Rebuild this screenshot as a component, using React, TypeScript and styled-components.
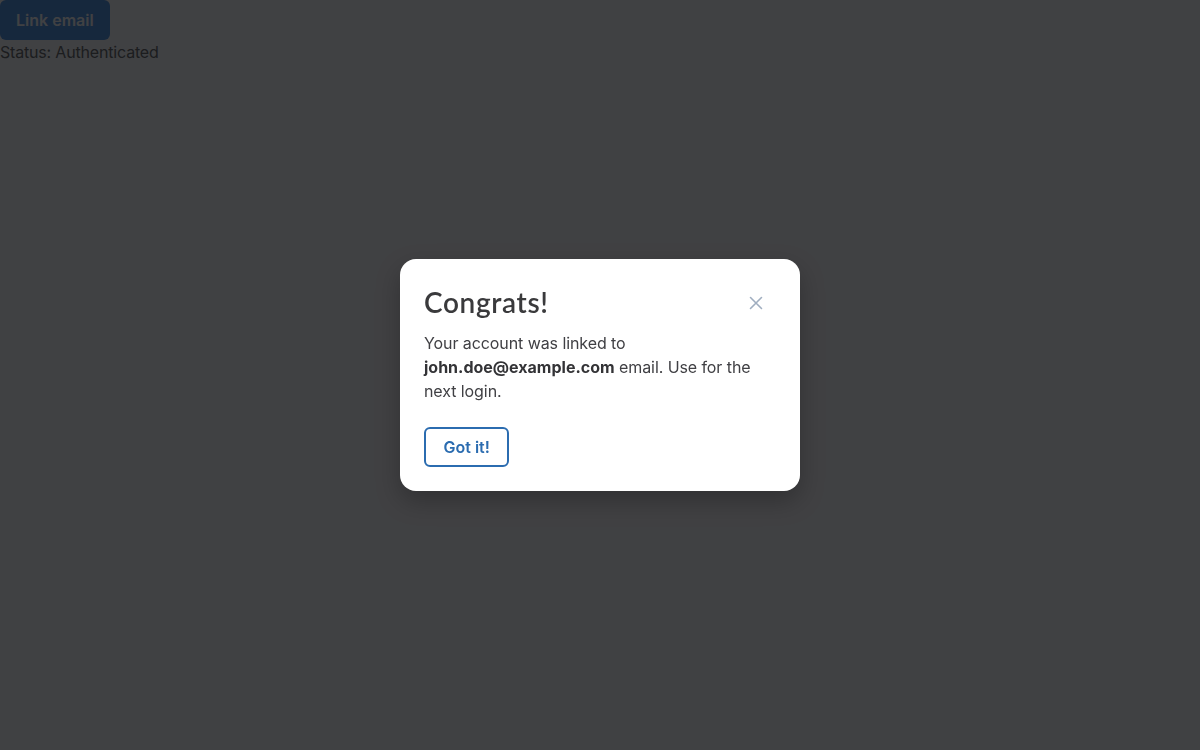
import React from "react";
import styled, { createGlobalStyle } from "styled-components";

const Global = createGlobalStyle`
  html, body { margin: 0; padding: 0; background: #ffffff; }
  body { font-family: Inter, "Liberation Sans", sans-serif; color: #1a202c; }
`;

const Page = styled.div`
  display: flex;
  flex-direction: column;
  align-items: flex-start;
`;

const PrimaryButton = styled.button`
  height: 40px;
  padding: 0 16px;
  border: none;
  border-radius: 6px;
  background: #5a9ae6;
  color: #ffffff;
  font-family: Inter, "Liberation Sans", sans-serif;
  font-size: 16px;
  font-weight: 600;
  cursor: pointer;
`;

const Status = styled.div`
  font-size: 16px;
  line-height: 24px;
  letter-spacing: -0.18px;
  color: #707070;
`;

const Overlay = styled.div`
  position: fixed;
  inset: 0;
  background: rgba(0, 1, 4, 0.748);
  display: flex;
  align-items: center;
  justify-content: center;
`;

const Dialog = styled.div`
  width: 400px;
  box-sizing: border-box;
  padding: 24px;
  background: #ffffff;
  border-radius: 16px;
  box-shadow: 0 10px 25px rgba(0, 0, 0, 0.25);
  display: flex;
  flex-direction: column;
`;

const Header = styled.div`
  display: flex;
  align-items: center;
  justify-content: space-between;
  height: 39px;
  margin-bottom: 9px;
`;

const Title = styled.h2`
  margin: 0 0 1px;
  font-family: Lato, "Open Sans", sans-serif;
  font-size: 28px;
  font-weight: 600;
  letter-spacing: 0.65px;
  color: #3a3a3c;
`;

const CloseButton = styled.button`
  width: 32px;
  height: 32px;
  margin-right: 4px;
  padding: 0;
  border: none;
  background: transparent;
  display: flex;
  align-items: center;
  justify-content: center;
  cursor: pointer;
`;

const Body = styled.p`
  margin: 0 0 24px;
  font-size: 16px;
  line-height: 24px;
  letter-spacing: -0.08px;
  color: #404044;
  strong { font-weight: 700; letter-spacing: 0; color: #333336; }
`;

const OutlineButton = styled.button`
  align-self: flex-start;
  height: 40px;
  padding: 0 17.5px;
  box-sizing: border-box;
  border: 2px solid #2b6cb0;
  border-radius: 6px;
  background: #ffffff;
  color: #2b6cb0;
  font-family: Inter, "Liberation Sans", sans-serif;
  font-size: 16px;
  font-weight: 600;
  line-height: 34px;
  cursor: pointer;
`;

export default function App() {
  return (
    <>
      <Global />
      <Page>
        <PrimaryButton>Link email</PrimaryButton>
        <Status>Status: Authenticated</Status>
      </Page>
      <Overlay>
        <Dialog role="dialog">
          <Header>
            <Title>Congrats!</Title>
            <CloseButton aria-label="Close">
              <svg width="14" height="14" viewBox="0 0 14 14" fill="none">
                <path d="M1.5 1.5 L12.5 12.5 M12.5 1.5 L1.5 12.5" stroke="#a0aec0" strokeWidth="1.6" strokeLinecap="round" />
              </svg>
            </CloseButton>
          </Header>
          <Body>
            Your account was linked to <strong>john.doe@example.com</strong> email. Use for the next login.
          </Body>
          <OutlineButton>Got it!</OutlineButton>
        </Dialog>
      </Overlay>
    </>
  );
}
